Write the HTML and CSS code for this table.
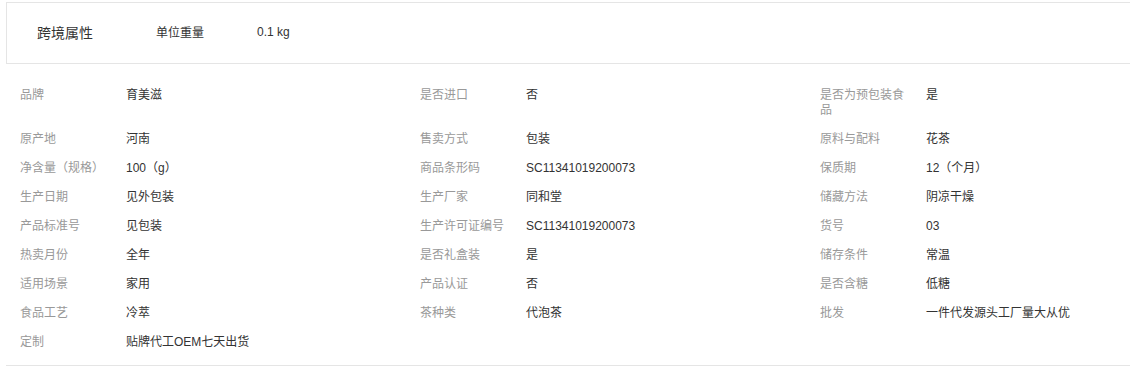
FILE: index.html
```html
<!DOCTYPE html>
<html lang="zh-CN">
<head>
    <meta charset="UTF-8">
    <meta name="viewport" content="width=device-width, initial-scale=1.0">
    <title>商品属性</title>
    <link rel="stylesheet" href="styles.css">
</head>
<body>
    <div class="attr-wrap">
        <div class="cross-box">
            <div class="cross-title">跨境属性</div>
            <div class="cross-label">单位重量</div>
            <div class="cross-value">0.1 kg</div>
        </div>

        <div class="attr-grid">
            <div class="attr-item"><span class="attr-name">品牌</span><span class="attr-value">育美滋</span></div>
            <div class="attr-item"><span class="attr-name">是否进口</span><span class="attr-value">否</span></div>
            <div class="attr-item"><span class="attr-name">是否为预包装食品</span><span class="attr-value">是</span></div>

            <div class="attr-item"><span class="attr-name">原产地</span><span class="attr-value">河南</span></div>
            <div class="attr-item"><span class="attr-name">售卖方式</span><span class="attr-value">包装</span></div>
            <div class="attr-item"><span class="attr-name">原料与配料</span><span class="attr-value">花茶</span></div>

            <div class="attr-item"><span class="attr-name">净含量（规格）</span><span class="attr-value">100（g）</span></div>
            <div class="attr-item"><span class="attr-name">商品条形码</span><span class="attr-value">SC11341019200073</span></div>
            <div class="attr-item"><span class="attr-name">保质期</span><span class="attr-value">12（个月）</span></div>

            <div class="attr-item"><span class="attr-name">生产日期</span><span class="attr-value">见外包装</span></div>
            <div class="attr-item"><span class="attr-name">生产厂家</span><span class="attr-value">同和堂</span></div>
            <div class="attr-item"><span class="attr-name">储藏方法</span><span class="attr-value">阴凉干燥</span></div>

            <div class="attr-item"><span class="attr-name">产品标准号</span><span class="attr-value">见包装</span></div>
            <div class="attr-item"><span class="attr-name">生产许可证编号</span><span class="attr-value">SC11341019200073</span></div>
            <div class="attr-item"><span class="attr-name">货号</span><span class="attr-value">03</span></div>

            <div class="attr-item"><span class="attr-name">热卖月份</span><span class="attr-value">全年</span></div>
            <div class="attr-item"><span class="attr-name">是否礼盒装</span><span class="attr-value">是</span></div>
            <div class="attr-item"><span class="attr-name">储存条件</span><span class="attr-value">常温</span></div>

            <div class="attr-item"><span class="attr-name">适用场景</span><span class="attr-value">家用</span></div>
            <div class="attr-item"><span class="attr-name">产品认证</span><span class="attr-value">否</span></div>
            <div class="attr-item"><span class="attr-name">是否含糖</span><span class="attr-value">低糖</span></div>

            <div class="attr-item"><span class="attr-name">食品工艺</span><span class="attr-value">冷萃</span></div>
            <div class="attr-item"><span class="attr-name">茶种类</span><span class="attr-value">代泡茶</span></div>
            <div class="attr-item"><span class="attr-name">批发</span><span class="attr-value">一件代发源头工厂量大从优</span></div>

            <div class="attr-item"><span class="attr-name">定制</span><span class="attr-value">贴牌代工OEM七天出货</span></div>
        </div>
    </div>
</body>
</html>
```

FILE: styles.css
```css
body {
    margin: 0;
    padding: 0;
    background-color: #fff;
    font-family: "Liberation Sans", "Noto Sans CJK SC", sans-serif;
    color: #333;
}
.attr-wrap {
    padding: 2px 0 0 6px;
}
/* 右侧在可视区外, 不画右边框 */
.cross-box {
    display: flex;
    align-items: center;
    height: 57px;
    padding: 0 0 3px 30px;
    border: 1px solid #e5e5e5;
    border-right: none;
}
.cross-title {
    width: 119px;
    font-size: 14px;
    color: #333;
}
.cross-label {
    width: 101px;
    font-size: 12px;
    color: #333;
}
.cross-value {
    font-size: 12px;
    color: #333;
}
.attr-grid {
    display: grid;
    grid-template-columns: 400px 400px 1fr;
    padding: 17px 0 8px 14px;
    border-bottom: 1px solid #e5e5e5;
}
.attr-item {
    display: flex;
    align-items: flex-start;
    padding: 7px 0;
    font-size: 12px;
    line-height: 15px;
}
.attr-name {
    width: 90px;
    margin-right: 16px;
    flex-shrink: 0;
    color: #999;
}
.attr-value {
    color: #333;
}
```
